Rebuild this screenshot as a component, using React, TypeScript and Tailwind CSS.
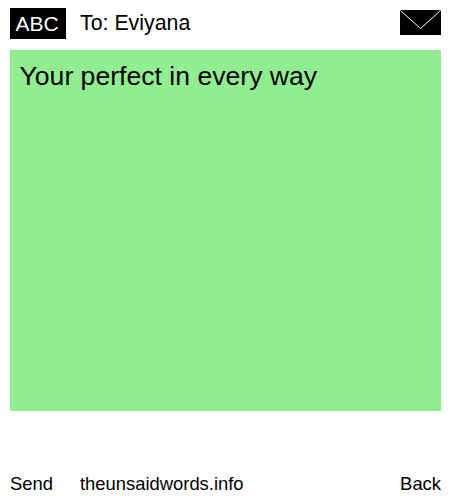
export default function App() {
  return (
    <div className="flex h-[500px] w-[450px] flex-col bg-white pl-[10px] pr-[9px] pt-2 font-['Liberation_Sans',Arial,sans-serif] text-black">
      <div className="flex h-[31px] items-start">
        <div className="flex h-[31px] w-14 items-center justify-center bg-black pr-[2px] text-[21px] text-white">ABC</div>
        <div className="ml-[14px] flex-1 text-[21.33px] leading-[31px]">To: Eviyana</div>
        <svg width="41" height="25" viewBox="0 0 41 25" className="mt-[2px] block">
          <rect width="41" height="25" fill="#000" />
          <path d="M0.5 0.5 L20.5 18.5 L40.5 0.5" fill="none" stroke="#fff" strokeWidth="1" />
        </svg>
      </div>
      <div className="mt-[11px] h-[361px] bg-[#90ee90] pl-[9.5px] pt-2 text-[26.6px] leading-[36px]">Your perfect in every way</div>
      <div className="mt-[62px] flex items-center text-[18.4px] leading-[22px]">
        <span className="w-[70px]">Send</span>
        <span className="flex-1">theunsaidwords.info</span>
        <span>Back</span>
      </div>
    </div>
  );
}
